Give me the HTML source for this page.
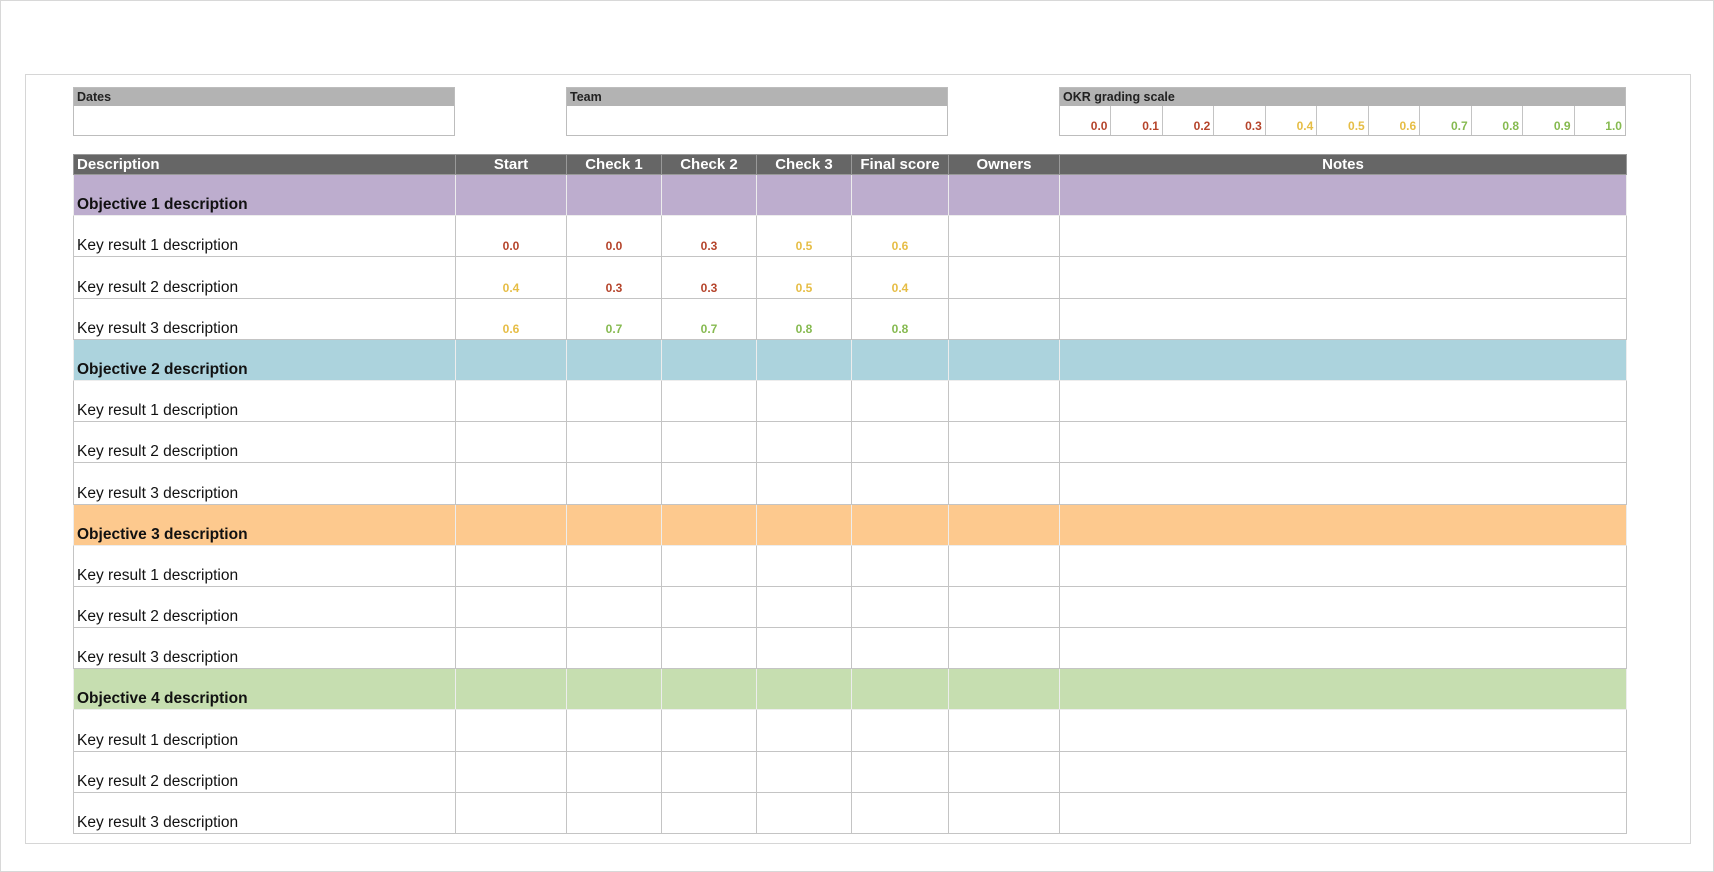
<!DOCTYPE html>
<html><head><style>
body{margin:0;width:1714px;height:872px;background:#fff;font-family:"Liberation Sans",Arial,sans-serif;position:relative;overflow:hidden;border:1px solid #d8d8d8;box-sizing:border-box}
.frame{position:absolute;left:24px;top:73px;width:1666px;height:770px;border:1px solid #d6d6d6;box-sizing:border-box}
.box{position:absolute;top:86px;height:49px;border:1px solid #bdbdbd;box-sizing:border-box}
.box .h{background:#b3b3b3;height:18px;font-size:12.5px;font-weight:bold;padding-left:3px;line-height:19px;color:#222}
table{position:absolute;left:72px;top:153px;border-collapse:collapse;table-layout:fixed}
tr{height:41.2px}
td{border:1px solid #c4c4c4;padding:0 3px 2px;vertical-align:bottom;font-size:15.5px;line-height:16px;color:#111;white-space:nowrap;overflow:hidden}
tr.hd{height:20px}
tr.hd td{background:#666;color:#fff;font-weight:bold;vertical-align:middle;text-align:center;border-color:#999;padding:0;font-size:15px;line-height:18px}
tr.hd td:first-child{text-align:left;padding-left:3px;vertical-align:bottom}
tr.o td{font-weight:bold;border-color:rgba(0,0,0,.07)}
.p td{background:#bdadce}.b td{background:#acd3dd}.or td{background:#fdc98e}.g td{background:#c6deb0}
td.n{text-align:center;font-weight:bold;font-size:12px;line-height:13px;padding-bottom:3px}
.r{color:#b5442b}.y{color:#e6bd45}.gr{color:#86ba50}
.sc{display:flex;height:29px}.sc div{flex:1;border-right:1px solid #c4c4c4;text-align:right;font-size:12px;font-weight:bold;padding:13px 3px 0 0}
.sc div:last-child{border-right:none}
</style></head><body>
<div class="frame"></div>
<div class="box" style="left:72px;width:382px"><div class="h">Dates</div></div>
<div class="box" style="left:565px;width:382px"><div class="h">Team</div></div>
<div class="box" style="left:1058px;width:567px"><div class="h">OKR grading scale</div>
<div class="sc"><div class="r">0.0</div><div class="r">0.1</div><div class="r">0.2</div><div class="r">0.3</div><div class="y">0.4</div><div class="y">0.5</div><div class="y">0.6</div><div class="gr">0.7</div><div class="gr">0.8</div><div class="gr">0.9</div><div class="gr">1.0</div></div></div>
<table>
<colgroup><col style="width:382px"><col style="width:111px"><col style="width:95px"><col style="width:95px"><col style="width:95px"><col style="width:97px"><col style="width:111px"><col style="width:567px"></colgroup>
<tr class="hd"><td>Description</td><td>Start</td><td>Check 1</td><td>Check 2</td><td>Check 3</td><td>Final score</td><td>Owners</td><td>Notes</td></tr>
<tr class="o p"><td>Objective 1 description</td><td></td><td></td><td></td><td></td><td></td><td></td><td></td></tr>
<tr><td>Key result 1 description</td><td class="n r">0.0</td><td class="n r">0.0</td><td class="n r">0.3</td><td class="n y">0.5</td><td class="n y">0.6</td><td></td><td></td></tr>
<tr><td>Key result 2 description</td><td class="n y">0.4</td><td class="n r">0.3</td><td class="n r">0.3</td><td class="n y">0.5</td><td class="n y">0.4</td><td></td><td></td></tr>
<tr><td>Key result 3 description</td><td class="n y">0.6</td><td class="n gr">0.7</td><td class="n gr">0.7</td><td class="n gr">0.8</td><td class="n gr">0.8</td><td></td><td></td></tr>
<tr class="o b"><td>Objective 2 description</td><td></td><td></td><td></td><td></td><td></td><td></td><td></td></tr>
<tr><td>Key result 1 description</td><td></td><td></td><td></td><td></td><td></td><td></td><td></td></tr>
<tr><td>Key result 2 description</td><td></td><td></td><td></td><td></td><td></td><td></td><td></td></tr>
<tr><td>Key result 3 description</td><td></td><td></td><td></td><td></td><td></td><td></td><td></td></tr>
<tr class="o or"><td>Objective 3 description</td><td></td><td></td><td></td><td></td><td></td><td></td><td></td></tr>
<tr><td>Key result 1 description</td><td></td><td></td><td></td><td></td><td></td><td></td><td></td></tr>
<tr><td>Key result 2 description</td><td></td><td></td><td></td><td></td><td></td><td></td><td></td></tr>
<tr><td>Key result 3 description</td><td></td><td></td><td></td><td></td><td></td><td></td><td></td></tr>
<tr class="o g"><td>Objective 4 description</td><td></td><td></td><td></td><td></td><td></td><td></td><td></td></tr>
<tr><td>Key result 1 description</td><td></td><td></td><td></td><td></td><td></td><td></td><td></td></tr>
<tr><td>Key result 2 description</td><td></td><td></td><td></td><td></td><td></td><td></td><td></td></tr>
<tr><td>Key result 3 description</td><td></td><td></td><td></td><td></td><td></td><td></td><td></td></tr>
</table>
</body></html>
